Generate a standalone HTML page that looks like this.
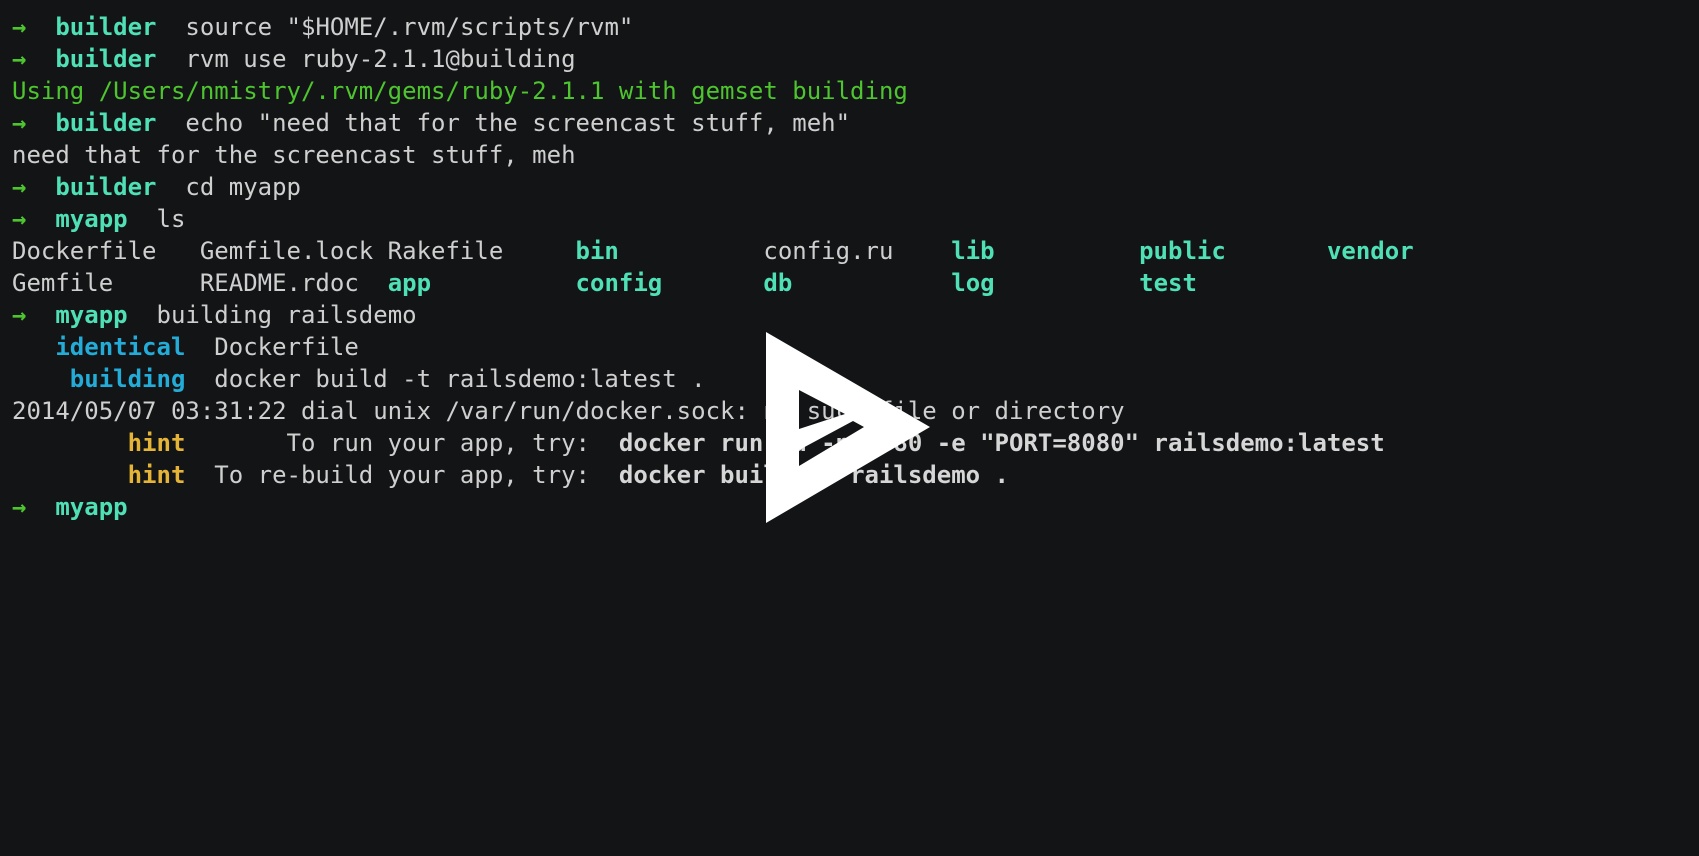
<!DOCTYPE html>
<html><head><meta charset="utf-8">
<style>
html,body{margin:0;padding:0;background:#121416;width:1699px;height:856px;overflow:hidden}
pre{margin:0;padding:11px 12px;font-family:"DejaVu Sans Mono","Liberation Mono",monospace;font-size:24px;line-height:32px;color:#cfcfcf;white-space:pre}
.a{color:#4ec52f;font-weight:bold}
.c{color:#4fe0b5;font-weight:bold}
.g{color:#4ec52f}
.b{color:#23acd8;font-weight:bold}
.y{color:#e5b437;font-weight:bold}
.w{font-weight:bold;color:#d6d6d6}
svg{position:absolute;left:0;top:0}
</style></head><body>
<pre><span class="a">→</span>  <span class="c">builder</span>  source "$HOME/.rvm/scripts/rvm"
<span class="a">→</span>  <span class="c">builder</span>  rvm use ruby-2.1.1@building
<span class="g">Using /Users/nmistry/.rvm/gems/ruby-2.1.1 with gemset building</span>
<span class="a">→</span>  <span class="c">builder</span>  echo "need that for the screencast stuff, meh"
need that for the screencast stuff, meh
<span class="a">→</span>  <span class="c">builder</span>  cd myapp
<span class="a">→</span>  <span class="c">myapp</span>  ls
Dockerfile   Gemfile.lock Rakefile     <span class="c">bin</span>          config.ru    <span class="c">lib</span>          <span class="c">public</span>       <span class="c">vendor</span>
Gemfile      README.rdoc  <span class="c">app</span>          <span class="c">config</span>       <span class="c">db</span>           <span class="c">log</span>          <span class="c">test</span>
<span class="a">→</span>  <span class="c">myapp</span>  building railsdemo
   <span class="b">identical</span>  Dockerfile
    <span class="b">building</span>  docker build -t railsdemo:latest .
2014/05/07 03:31:22 dial unix /var/run/docker.sock: no such file or directory
        <span class="y">hint</span>       To run your app, try:  <span class="w">docker run -d -p 8080 -e "PORT=8080" railsdemo:latest</span>
        <span class="y">hint</span>  To re-build your app, try:  <span class="w">docker build -t railsdemo .</span>
<span class="a">→</span>  <span class="c">myapp</span></pre>
<svg width="1699" height="856" viewBox="0 0 1699 856">
<path fill="#fff" fill-rule="evenodd" d="M766,332 L930,427 L766,523 Z M799,390 L845,414 L799,429 Z M799,450 L853,421 L864,427 L799,466 Z"/>
</svg>
</body></html>
